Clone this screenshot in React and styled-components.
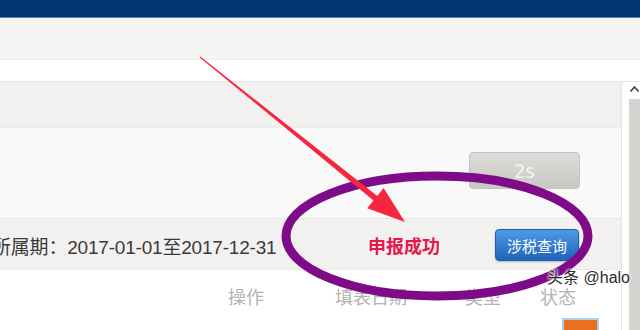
import React from 'react';
import styled, { createGlobalStyle } from 'styled-components';

const GlobalStyle = createGlobalStyle`
  html, body {
    margin: 0;
    padding: 0;
    background: #ffffff;
    overflow: hidden;
  }
  body {
    font-family: "Liberation Sans", "Noto Sans CJK SC", sans-serif;
  }
`;

const Page = styled.div`
  position: relative;
  width: 640px;
  height: 330px;
  overflow: hidden;
  display: flex;
  flex-direction: column;
  background: #ffffff;
`;

const TopBar = styled.div`
  flex-shrink: 0;
  height: 17px;
  background: #003574;
  border-bottom: 1px solid #5f7fa8;
`;

const SubBar = styled.div`
  flex-shrink: 0;
  height: 41px;
  background: #f5f5f4;
  border-bottom: 1px solid #ebebeb;
`;

const WhiteBand = styled.div`
  flex-shrink: 0;
  height: 21px;
  background: #ffffff;
  border-bottom: 1px solid #e6e6e6;
`;

const Main = styled.div`
  flex: 1;
  display: flex;
  min-height: 0;
`;

const Panel = styled.div`
  width: 621px;
  border-right: 1px solid #e4e4e4;
  display: flex;
  flex-direction: column;
  overflow: hidden;
  & > * {
    flex-shrink: 0;
  }
`;

const PanelHead = styled.div`
  height: 45px;
  background: #f2f1f0;
  border-bottom: 1px solid #ebebea;
`;

const PanelBody = styled.div`
  height: 90px;
  background: #f9f9f9;
  display: flex;
  justify-content: flex-end;
  align-items: flex-start;
  padding: 24px 41px 0 0;
  box-sizing: border-box;
`;

const CountButton = styled.button`
  width: 111px;
  height: 37px;
  border: 1px solid #c4c2be;
  border-radius: 4px;
  background: linear-gradient(#dedcd9, #cac8c4);
  color: #f3f3f3;
  font-family: "DejaVu Sans Condensed", "Liberation Sans", sans-serif;
  font-size: 20px;
  padding: 0;
`;

const InfoRow = styled.div`
  height: 52px;
  background: #f2f1f0;
  border-top: 1px solid #e6e5e4;
  border-bottom: 1px solid #e8e8e8;
  box-sizing: border-box;
  padding-top: 2px;
  display: flex;
  align-items: center;
  overflow: hidden;
`;

const Period = styled.div`
  flex: 0 0 376px;
  margin-left: -8px;
  font-size: 19px;
  letter-spacing: -0.2px;
  color: #3a3a3a;
  white-space: nowrap;
  overflow: hidden;
`;

const Status = styled.div`
  flex: 0 0 127px;
  font-size: 18px;
  font-weight: bold;
  color: #e8174b;
  white-space: nowrap;
`;

const QueryButton = styled.button`
  width: 84px;
  height: 32px;
  border: 1px solid #1d5fae;
  border-radius: 4px;
  background: linear-gradient(#4d9be6, #1f64b8);
  color: #ffffff;
  font-family: "Noto Sans CJK SC", sans-serif;
  font-size: 15px;
  padding: 0;
  box-shadow: 0 1px 2px rgba(0, 0, 0, 0.25);
`;

const HeadRow = styled.div`
  height: 48px;
  box-sizing: border-box;
  padding-top: 4px;
  display: grid;
  grid-template-columns: 228px 107px 130px 75px 1fr;
  align-items: center;
  font-family: "Noto Sans CJK SC", sans-serif;
  font-size: 18px;
  color: #b3b3b3;
`;

const NextRow = styled.div`
  display: flex;
  justify-content: flex-end;
  padding: 0 22px 0 0;
`;

const OrangeTile = styled.div`
  width: 33px;
  height: 20px;
  background: #e8701f;
  border: 2px solid #a6d2ee;
  border-bottom: none;
`;

const Gutter = styled.div`
  flex: 1;
  display: flex;
  justify-content: flex-end;
`;

const ScrollBar = styled.div`
  width: 11px;
  display: flex;
  flex-direction: column;
  align-items: center;
  padding-top: 3px;
`;

const ScrollTrack = styled.div`
  margin-top: 6px;
  width: 11px;
  flex: 1;
  background: #d6d4d1;
`;

const Watermark = styled.div`
  position: absolute;
  right: 10px;
  top: 264px;
  font-family: "Liberation Sans", "Noto Sans CJK SC", sans-serif;
  font-size: 16px;
  color: #2a2a2a;
  text-shadow: 0 0 2px #fff, 0 0 2px #fff, 0 0 3px #fff;
  white-space: nowrap;
`;

const Overlay = styled.svg`
  position: absolute;
  left: 0;
  top: 0;
  pointer-events: none;
`;

export default function App() {
  return (
    <Page>
      <GlobalStyle />
      <TopBar />
      <SubBar />
      <WhiteBand />
      <Main>
        <Panel>
          <PanelHead />
          <PanelBody>
            <CountButton>2s</CountButton>
          </PanelBody>
          <InfoRow>
            <Period>所属期：2017-01-01至2017-12-31</Period>
            <Status>申报成功</Status>
            <QueryButton>涉税查询</QueryButton>
          </InfoRow>
          <HeadRow>
            <span />
            <span>操作</span>
            <span>填表日期</span>
            <span>类型</span>
            <span>状态</span>
          </HeadRow>
          <NextRow>
            <OrangeTile />
          </NextRow>
        </Panel>
        <Gutter>
          <ScrollBar>
            <svg width="11" height="8" viewBox="0 0 11 8">
              <path d="M1.5 6.5 L5.5 2 L9.5 6.5" fill="none" stroke="#444" strokeWidth="1.8" />
            </svg>
            <ScrollTrack />
          </ScrollBar>
        </Gutter>
      </Main>

      <Overlay width="640" height="330" viewBox="0 0 640 330">
        <ellipse cx="437" cy="236" rx="151" ry="60" fill="none" stroke="#7e0b88" strokeWidth="9" />
        <polygon
          points="199.7,57.4 200.3,56.6 377.3,195.9 383.6,188.1 405,222 367.2,208.3 373.5,200.5"
          fill="#f7263f"
        />
      </Overlay>
      <Watermark>头条 @halo</Watermark>
    </Page>
  );
}
